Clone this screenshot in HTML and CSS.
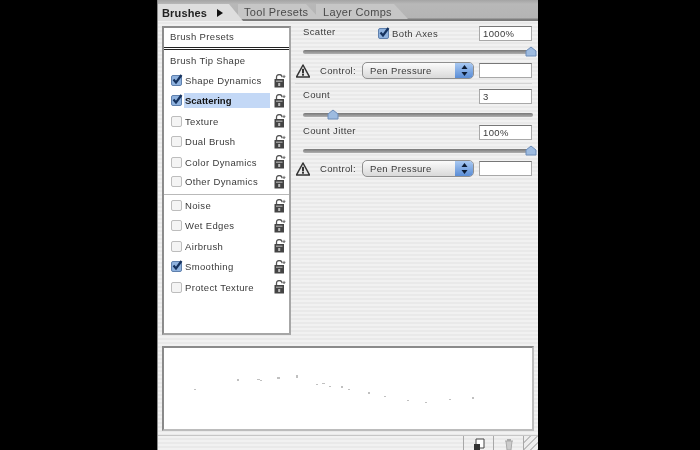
FILE: index.html
```html
<!DOCTYPE html>
<html>
<head>
<meta charset="utf-8">
<title>Brushes</title>
<link rel="stylesheet" href="styles.css">
</head>
<body>
<svg width="0" height="0" class="defs">
  <defs>
    <g id="lock">
      <path d="M2.5 5V3.2C2.5 1.4 3.7.6 5.2.6S8 1.4 8 3.2" fill="none" stroke="#555" stroke-width="1.3"/>
      <path d="M10 .5l.6 1.2 1.3.3-1 .9.2 1.2-1.1-.6-1 .6.2-1.2-1-.9 1.300-.3z" fill="#777"/>
      <rect x=".5" y="5" width="9.500" height="8.500" fill="#444"/>
      <rect x="2" y="6.500" width="6.500" height="1.500" fill="#999"/>
      <rect x="4.200" y="9" width="2" height="3" fill="#bbb"/>
    </g>
    <g id="warn">
      <path d="M7 1L13.500 13H.5z" fill="#e8e8e8" stroke="#333" stroke-width="1.500" stroke-linejoin="round"/>
      <rect x="6.100" y="4.800" width="1.800" height="4.600" fill="#222"/>
      <rect x="6.100" y="10" width="1.800" height="1.700" fill="#222"/>
    </g>
    <g id="tick">
      <path d="M2.500 5.500L5 8.500 10.500 1" fill="none" stroke="#16335f" stroke-width="2.200"/>
    </g>
    <g id="thumb">
      <path d="M1 5L6 1l5 4v5H1z" fill="#9dbbe0" stroke="#6c8cb8"/>
    </g>
    <g id="updown">
      <path d="M2.500 6l3-4 3 4zM2.500 9l3 4 3-4z" fill="#0c1c34"/>
    </g>
  </defs>
</svg>
<main class="panel">
  <header class="tabs">
    <div class="tab tab-active"><span class="tab-name">Brushes</span><span class="tab-arrow"></span></div>
    <div class="tab tab-tool">Tool Presets</div>
    <div class="tab tab-layer">Layer Comps</div>
  </header>
  <section class="body">
    <nav class="list">
      <div class="presets">Brush Presets</div>
      <div class="item item-head">Brush Tip Shape</div>
      <div class="item"><span class="box on"><svg width="13" height="11"><use href="#tick"/></svg></span><span class="name">Shape Dynamics</span><svg class="lock" width="13" height="14"><use href="#lock"/></svg></div>
      <div class="item"><span class="box on"><svg width="13" height="11"><use href="#tick"/></svg></span><span class="name name-sel">Scattering</span><svg class="lock" width="13" height="14"><use href="#lock"/></svg></div>
      <div class="item"><span class="box"></span><span class="name">Texture</span><svg class="lock" width="13" height="14"><use href="#lock"/></svg></div>
      <div class="item"><span class="box"></span><span class="name">Dual Brush</span><svg class="lock" width="13" height="14"><use href="#lock"/></svg></div>
      <div class="item"><span class="box"></span><span class="name">Color Dynamics</span><svg class="lock" width="13" height="14"><use href="#lock"/></svg></div>
      <div class="item item-last"><span class="box"></span><span class="name">Other Dynamics</span><svg class="lock" width="13" height="14"><use href="#lock"/></svg></div>
      <div class="item"><span class="box"></span><span class="name">Noise</span><svg class="lock" width="13" height="14"><use href="#lock"/></svg></div>
      <div class="item"><span class="box"></span><span class="name">Wet Edges</span><svg class="lock" width="13" height="14"><use href="#lock"/></svg></div>
      <div class="item"><span class="box"></span><span class="name">Airbrush</span><svg class="lock" width="13" height="14"><use href="#lock"/></svg></div>
      <div class="item"><span class="box on"><svg width="13" height="11"><use href="#tick"/></svg></span><span class="name">Smoothing</span><svg class="lock" width="13" height="14"><use href="#lock"/></svg></div>
      <div class="item"><span class="box"></span><span class="name">Protect Texture</span><svg class="lock" width="13" height="14"><use href="#lock"/></svg></div>
    </nav>
    <div class="controls">
      <div class="row row-top">
        <span class="label">Scatter</span>
        <span class="both"><span class="box on"><svg width="13" height="11"><use href="#tick"/></svg></span>Both Axes</span>
        <span class="field">1000%</span>
      </div>
      <div class="slider"><span class="track"></span><svg class="knob knob-max" width="12" height="11"><use href="#thumb"/></svg></div>
      <div class="row row-control">
        <svg class="warn" width="14" height="14"><use href="#warn"/></svg>
        <span class="ctl-label">Control:</span>
        <span class="select"><span class="select-text">Pen Pressure</span><span class="stepper"><svg width="11" height="15"><use href="#updown"/></svg></span></span>
        <span class="field field-blank"></span>
      </div>
      <div class="rule"></div>
      <div class="row row-count">
        <span class="label">Count</span>
        <span class="field">3</span>
      </div>
      <div class="slider"><span class="track"></span><svg class="knob knob-count" width="12" height="11"><use href="#thumb"/></svg></div>
      <div class="row row-jitter">
        <span class="label">Count Jitter</span>
        <span class="field">100%</span>
      </div>
      <div class="slider"><span class="track"></span><svg class="knob knob-max" width="12" height="11"><use href="#thumb"/></svg></div>
      <div class="row row-control row-control-last">
        <svg class="warn" width="14" height="14"><use href="#warn"/></svg>
        <span class="ctl-label">Control:</span>
        <span class="select"><span class="select-text">Pen Pressure</span><span class="stepper"><svg width="11" height="15"><use href="#updown"/></svg></span></span>
        <span class="field field-blank"></span>
      </div>
    </div>
  </section>
  <section class="preview">
    <svg class="stroke" width="368" height="81" viewBox="0 0 368 81">
      <g fill="#c0c0c0">
        <rect x="30" y="41" width="2" height="1"/><rect x="73" y="31" width="2" height="2"/>
        <rect x="93" y="31" width="3" height="1"/><rect x="96" y="32" width="2" height="1"/>
        <rect x="113" y="29" width="3" height="2"/><rect x="132" y="27" width="2" height="3"/>
        <rect x="152" y="36" width="2" height="1"/><rect x="158" y="35" width="3" height="1"/>
        <rect x="165" y="38" width="2" height="1"/><rect x="177" y="38" width="2" height="2"/>
        <rect x="184" y="41" width="2" height="1"/><rect x="204" y="44" width="2" height="2"/>
        <rect x="220" y="48" width="2" height="1"/><rect x="243" y="52" width="2" height="1"/>
        <rect x="261" y="54" width="2" height="1"/><rect x="285" y="51" width="2" height="1"/>
        <rect x="308" y="49" width="2" height="2"/>
      </g>
    </svg>
  </section>
  <footer class="foot">
    <span class="foot-btn"><svg width="12" height="13" viewBox="0 0 12 13"><path d="M3 1h8v9H3z" fill="#fff" stroke="#444"/><path d="M1 6h6v6H1z" fill="#333"/></svg></span>
    <span class="foot-btn"><svg width="12" height="13" viewBox="0 0 12 13"><path d="M2 3h8M3 3l1 9h4l1-9" fill="#ccc" stroke="#aaa"/><path d="M4 1h4v2H4z" fill="#aaa"/></svg></span>
    <span class="grip"></span>
  </footer>
</main>
</body>
</html>
```
FILE: styles.css
```css
* { box-sizing: border-box; }
html, body { margin: 0; padding: 0; }
body {
  width: 700px;
  height: 450px;
  overflow: hidden;
  background: #000;
  display: flex;
  justify-content: center;
  padding-right: 5px;
  font-family: "Liberation Sans", Arial, sans-serif;
  font-size: 9.5px;
  letter-spacing: .35px;
  color: #3a3a3a;
}
.defs { position: absolute; }
.panel {
  width: 381px;
  height: 450px;
  display: flex;
  flex-direction: column;
  background: repeating-linear-gradient(180deg, #f1f1f1 0 2px, #e9e9e9 2px 4px);
  border-left: 1px solid #8a8a8a;
  filter: blur(.35px);
}
.tabs {
  height: 21px;
  display: flex;
  background: linear-gradient(180deg, #a4a4a4 0, #b8b8b8 4px, #b4b4b4 18px, #7e7e7e 19px, #777 21px);
  font-size: 11px;
  letter-spacing: .32px;
}
.tab {
  height: 15px;
  margin-top: 4px;
  display: flex;
  align-items: center;
  color: #4a4a4a;
  background: #c6c6c6;
  clip-path: polygon(0 0, calc(100% - 14px) 0, 100% 100%, 0 100%);
}
.tab-active {
  width: 85px;
  height: 17px;
  padding-left: 4px;
  gap: 10px;
  background: #dedede;
  color: #222;
  font-weight: bold;
  letter-spacing: .15px;
  z-index: 2;
}
.tab-arrow {
  width: 0; height: 0;
  border-left: 6px solid #111;
  border-top: 4px solid transparent;
  border-bottom: 4px solid transparent;
}
.tab-tool { width: 82px; margin-left: -5px; padding-left: 6px; z-index: 1; }
.tab-layer { width: 92px; margin-left: -4px; padding-left: 7px; }
.body {
  height: 315px;
  display: flex;
  padding: 5px 0 0 4px;
}
.list {
  width: 129px;
  height: 309px;
  background: #fff;
  border: 2px solid #a6a6a6;
  border-left-color: #8c8c8c;
  border-top-color: #8c8c8c;
  display: flex;
  flex-direction: column;
  padding-right: 1px;
}
.presets {
  height: 22px;
  flex: none;
  padding: 0 0 2px 6px;
  border-bottom: 3px double #222;
  display: flex;
  align-items: center;
  margin-right: -1px;
}
.item {
  height: 20.4px;
  flex: none;
  display: flex;
  align-items: center;
  padding-left: 7px;
}
.item-head { padding-left: 6px; }
.item-last { border-bottom: 1px solid #b9b9b9; height: 23px; padding-bottom: 3px; margin-right: -1px; padding-right: 1px; }
.box {
  width: 11px;
  height: 11px;
  flex: none;
  margin-right: 2px;
  background: #f4f4f4;
  border: 1px solid #bdbdbd;
  border-radius: 2px;
  position: relative;
  display: block;
}
.box svg { position: absolute; left: -1px; top: -2px; }
.box.on { background: #8fb2de; border-color: #5f80ad; }
.name { flex: 1; padding: 2px 1px; }
.name-sel { background: #c3d8f6; color: #111; font-weight: bold; letter-spacing: 0; flex: none; width: 86px; }
.lock { margin-left: auto; margin-right: 1px; flex: none; }
.controls {
  width: 240px;
  margin-left: 1px;
  padding: 0 0 0 11px;
  display: flex;
  flex-direction: column;
}
.row { display: flex; align-items: center; }
.row-top { height: 15px; }
.label { flex: 1; align-self: flex-start; }
.both { display: flex; align-items: center; margin-right: 41px; }
.both .box { margin-right: 3px; }
.field {
  width: 53px;
  height: 15px;
  background: #fff;
  border: 1px solid #a8a8a8;
  border-top-color: #777;
  padding-left: 3px;
  line-height: 14px;
  flex: none;
}
.field-blank { margin-left: 5px; }
.slider {
  height: 21px;
  position: relative;
  display: flex;
  align-items: center;
}
.track {
  width: 230px;
  height: 4px;
  flex: none;
  border-radius: 2px;
  background: linear-gradient(180deg, #777, #b0b0b0);
}
.knob { position: absolute; top: 5px; }
.knob-max { left: 222px; }
.knob-count { left: 24px; }
.row-control { height: 17px; margin-left: -7px; }
.row-control-last { margin-top: -1px; }
.warn { margin-right: 10px; flex: none; }
.ctl-label { width: 42px; flex: none; }
.select {
  width: 112px;
  height: 17px;
  background: linear-gradient(180deg, #fbfbfb, #d9d9d9);
  border: 1px solid #8f8f8f;
  border-radius: 5px;
  display: flex;
  align-items: center;
  overflow: hidden;
  flex: none;
}
.select-text { flex: 1; padding-left: 7px; }
.stepper {
  width: 18px;
  height: 100%;
  background: linear-gradient(180deg, #a9c9f2, #5a8dd6);
  display: flex;
  align-items: center;
  justify-content: center;
}
.rule { height: 1px; background: #d4d4d4; margin: 4px 0 0 -8px; flex: none; }
.row-count { height: 15px; margin-top: 5px; }
.row-jitter { height: 15px; }
.preview {
  width: 372px;
  height: 85px;
  margin: 11px 0 0 4px;
  background: #fff;
  border: 2px solid #bcbcbc;
  border-top-color: #8a8a8a;
  border-left-color: #8a8a8a;
}
.stroke { display: block; }
.foot {
  flex: 1;
  margin-top: 4px;
  border-top: 1px solid #c6c6c6;
  display: flex;
  justify-content: flex-end;
  align-items: stretch;
}
.foot-btn {
  width: 30px;
  border-left: 1px solid #a8a8a8;
  display: flex;
  align-items: flex-start;
  justify-content: center;
  padding-top: 2px;
}
.grip {
  width: 15px;
  border-left: 1px solid #a8a8a8;
  background: repeating-linear-gradient(135deg, #eee 0 4px, #c0c0c0 4px 5px);
}
```
